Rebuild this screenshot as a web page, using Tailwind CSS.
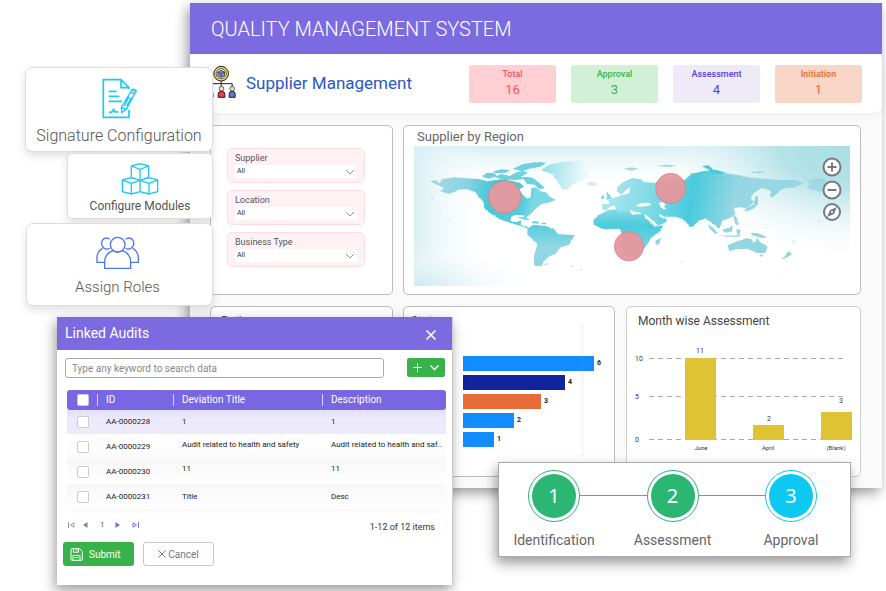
<!DOCTYPE html>
<html lang="en">
<head>
<meta charset="utf-8">
<meta name="viewport" content="width=device-width, initial-scale=1">
<title>Quality Management System</title>
<script src="https://cdn.jsdelivr.net/npm/@tailwindcss/browser@4"></script>
</head>
<body class="bg-white font-[Roboto,'Liberation_Sans',sans-serif] text-[#555]">
<div class="relative min-h-screen overflow-hidden pt-[3px] pr-1 pl-[190px]">

  <!-- Main window -->
  <main class="bg-[#fafafa] shadow-[-3px_5px_12px_rgba(0,0,0,0.4)]">
    <header class="flex h-[51px] items-center bg-[#7c6be0] px-[21px]">
      <h1 class="text-[20px] font-light text-white">QUALITY MANAGEMENT SYSTEM</h1>
    </header>

    <section class="flex h-[59px] items-center rounded-lg bg-white pr-5 pl-4 shadow-[0_2px_6px_rgba(0,0,0,0.06)]">
      <svg class="mb-1 h-[34px] w-[31px]" viewBox="62 195 92 102" aria-hidden="true">
        <path d="M74 262v-11h66v11M107 243v20" fill="none" stroke="#222" stroke-width="3"/>
        <circle cx="107" cy="221" r="22" fill="#f6cf58" stroke="#222" stroke-width="3"/>
        <circle cx="107" cy="221" r="15" fill="#e9eefb" stroke="#222" stroke-width="2"/>
        <path d="M97 216l10-5 10 5v11l-10 5-10-5z" fill="#7d92d8" stroke="#222" stroke-width="2"/>
        <path d="M97 216l10 5 10-5M107 221v11" fill="none" stroke="#222" stroke-width="2"/>
        <path d="M65 292v-10q0-7 9-7t9 7v10z" fill="#f2b84b" stroke="#222" stroke-width="2"/>
        <circle cx="74" cy="267" r="7" fill="#fbd9c2" stroke="#222" stroke-width="2"/>
        <path d="M98 292v-10q0-8 10-8t10 8v10z" fill="#f03c4b" stroke="#222" stroke-width="3"/>
        <circle cx="108" cy="266" r="7" fill="#fbd9c2" stroke="#222" stroke-width="2"/>
        <path d="M131 292v-10q0-8 9-8t9 8v10z" fill="#5c7bd0" stroke="#222" stroke-width="3"/>
        <circle cx="140" cy="266" r="7" fill="#fbd9c2" stroke="#222" stroke-width="2"/>
      </svg>
      <h2 class="ml-[9px] text-[17px] text-[#2b57c4]">Supplier Management</h2>
      <dl class="ml-auto flex gap-[15px] text-center">
        <div class="h-[38px] w-[87px] rounded-[3px] bg-[#ffd0d3] pt-[3px] text-[#fb5060]"><dt class="text-[9px] leading-[13px] font-medium">Total</dt><dd class="text-[13px] leading-[18px]">16</dd></div>
        <div class="h-[38px] w-[87px] rounded-[3px] bg-[#d2f0d6] pt-[3px] text-[#34b84b]"><dt class="text-[9px] leading-[13px] font-medium">Approval</dt><dd class="text-[13px] leading-[18px]">3</dd></div>
        <div class="h-[38px] w-[87px] rounded-[3px] bg-[#eeeaf8] pt-[3px] text-[#5a3de0]"><dt class="text-[9px] leading-[13px] font-medium">Assessment</dt><dd class="text-[13px] leading-[18px]">4</dd></div>
        <div class="h-[38px] w-[87px] rounded-[3px] bg-[#f7d5c7] pt-[3px] text-[#e56c36]"><dt class="text-[9px] leading-[13px] font-medium">Initiation</dt><dd class="text-[13px] leading-[18px]">1</dd></div>
      </dl>
    </section>

    <div class="flex flex-col gap-[11px] pt-3 pr-[21px] pb-[11px] pl-5">
      <div class="flex gap-[10px]">
        <!-- Filters -->
        <form class="flex h-[170px] w-[183px] flex-col gap-[7px] rounded-[5px] border border-[#bdbdbd] bg-white pt-[22px] pl-4">
          <div class="h-[35px] w-[138px] rounded-[5px] border border-[#ffdce2] bg-[#fff2f4] px-[7px] pt-[2px]">
            <label for="supplier" class="block text-[9px] leading-[14px]">Supplier</label>
            <div class="relative"><select id="supplier" class="block h-[13px] w-full appearance-none bg-white pl-[2px] text-[7px] leading-[13px] text-[#333]"><option>All</option></select>
            <svg class="pointer-events-none absolute top-1 right-[2px] h-[6px] w-[10px]" viewBox="0 0 10 6" fill="none" stroke="#999"><path d="M1 1l4 4 4-4"/></svg></div>
          </div>
          <div class="h-[35px] w-[138px] rounded-[5px] border border-[#ffdce2] bg-[#fff2f4] px-[7px] pt-[2px]">
            <label for="location" class="block text-[9px] leading-[14px]">Location</label>
            <div class="relative"><select id="location" class="block h-[13px] w-full appearance-none bg-white pl-[2px] text-[7px] leading-[13px] text-[#333]"><option>All</option></select>
            <svg class="pointer-events-none absolute top-1 right-[2px] h-[6px] w-[10px]" viewBox="0 0 10 6" fill="none" stroke="#999"><path d="M1 1l4 4 4-4"/></svg></div>
          </div>
          <div class="h-[35px] w-[138px] rounded-[5px] border border-[#ffdce2] bg-[#fff2f4] px-[7px] pt-[2px]">
            <label for="btype" class="block text-[9px] leading-[14px]">Business Type</label>
            <div class="relative"><select id="btype" class="block h-[13px] w-full appearance-none bg-white pl-[2px] text-[7px] leading-[13px] text-[#333]"><option>All</option></select>
            <svg class="pointer-events-none absolute top-1 right-[2px] h-[6px] w-[10px]" viewBox="0 0 10 6" fill="none" stroke="#999"><path d="M1 1l4 4 4-4"/></svg></div>
          </div>
        </form>

        <!-- Map -->
        <section class="h-[170px] flex-1 rounded-[5px] border border-[#bdbdbd] bg-white px-[10px] pt-[2px]">
          <h3 class="pl-[3px] text-[13px] leading-[18px] text-[#666]">Supplier by Region</h3>
          <div class="relative">
            <svg class="block h-[140px] w-full" viewBox="42 78 1308 420" preserveAspectRatio="none" role="img" aria-label="World map of suppliers">
              <defs>
                <linearGradient id="top" x1="0" y1="0" x2="0" y2="1"><stop offset="0" stop-color="#d5edf1"/><stop offset=".3" stop-color="#fff" stop-opacity="0"/></linearGradient>
                <radialGradient id="bl" cx="0" cy="1" r=".3"><stop offset="0" stop-color="#cdeaf0"/><stop offset="1" stop-color="#fff" stop-opacity="0"/></radialGradient>
                <linearGradient id="left" x1="0" x2="1" y1="0" y2="0"><stop offset="0" stop-color="#d8eff3"/><stop offset=".17" stop-color="#fff" stop-opacity="0"/></linearGradient>
                <radialGradient id="r" gradientUnits="userSpaceOnUse" cx="1350" cy="78" r="500" gradientTransform="translate(1350 78) scale(1.2 .7) translate(-1350 -78)"><stop offset="0" stop-color="#a9dfe3"/><stop offset=".35" stop-color="#b4e2e7"/><stop offset="1" stop-color="#fff" stop-opacity="0"/></radialGradient>
                <linearGradient id="na" gradientUnits="userSpaceOnUse" x1="120" y1="180" x2="400" y2="250"><stop offset="0" stop-color="#9ed7e4"/><stop offset=".25" stop-color="#8fd3e1"/><stop offset=".55" stop-color="#45c8da"/><stop offset=".9" stop-color="#55cddd"/><stop offset="1" stop-color="#7dd8e5"/></linearGradient>
                <linearGradient id="gr" gradientUnits="userSpaceOnUse" x1="425" y1="140" x2="560" y2="160"><stop offset="0" stop-color="#8fdde8"/><stop offset="1" stop-color="#f2fbfc"/></linearGradient>
                <linearGradient id="sa" x1="0" y1="0" x2="0" y2="1"><stop offset="0" stop-color="#55cedd"/><stop offset=".55" stop-color="#97d7e4"/><stop offset="1" stop-color="#8fd3e1"/></linearGradient>
                <linearGradient id="af" x1="0" y1="0" x2="0" y2="1"><stop offset="0" stop-color="#86dae6"/><stop offset=".35" stop-color="#4ccbdc"/><stop offset="1" stop-color="#8dd6e3"/></linearGradient>
                <linearGradient id="eu" gradientUnits="userSpaceOnUse" x1="-50" y1="190" x2="310" y2="260"><stop offset="0" stop-color="#a9e4ec"/><stop offset=".35" stop-color="#7bd9e5"/><stop offset=".65" stop-color="#48cbdc"/><stop offset="1" stop-color="#97d6e3"/></linearGradient>
                <filter id="coast" color-interpolation-filters="sRGB" x="-2%" y="-5%" width="104%" height="110%"><feTurbulence type="fractalNoise" baseFrequency=".12" numOctaves="3" seed="4"/><feDisplacementMap in="SourceGraphic" scale="6" xChannelSelector="R" yChannelSelector="G"/></filter>
              </defs>
              <path fill="#fff" d="M42 78h1308v420H42z"/>
              <path fill="url(#top)" d="M42 78h1308v420H42z"/>
              <path fill="url(#left)" d="M42 78h1308v420H42z"/>
              <path fill="url(#bl)" d="M42 78h1308v420H42z"/>
              <path fill="url(#r)" d="M42 78h1308v420H42z"/>
              <g filter="url(#coast)">
                <path fill="url(#na)" d="M90 184L108 181 120 190 125 178 160 172 240 178 262 184 300 178 340 183 362 190 372 200 358 208 368 224 382 236 392 230 394 205 408 202 425 215 436 216 452 232 468 240 445 248 425 252 405 268 393 282 380 290 378 300 370 286 345 285 333 291 332 303 350 306 364 301 362 315 385 320 384 326 362 318 330 308 300 298 275 283 255 268 250 246 225 216 200 208 175 210 150 222 120 214 132 205 120 198z"/>
                <path fill="#6dd2df" d="M245 170L257 159 284 158 290 168 268 176zM284 170L304 162 330 168 342 160 362 164 368 178 346 180 310 180zM280 154L305 148 330 150 318 158 288 160zM338 146L370 132 410 126 440 128 420 140 388 146 366 154zM340 160L368 152 384 158 368 168 344 168zM364 170L396 172 418 188 434 204 418 208 404 194 382 192z"/>
                <path fill="#6dd2df" d="M350 292h24l18 9-18-2zM396 302l22 3-4 6-18-2zM425 308h14v5h-14z"/>
                <path fill="url(#gr)" d="M424 150L446 134 490 125 545 122 580 135 570 160 548 182 520 192 500 210 485 205 470 180 454 162z"/>
                <path fill="#c9edf2" d="M558 190l18-4 16 5-8 7-20-2z"/>
                <path fill="url(#sa)" d="M382 326L400 314 438 318 462 328 474 342 524 346 508 374 482 382 468 400 446 410 430 426 426 439 402 434 402 408 412 372 396 356 382 344z"/>
                <path fill="url(#af)" d="M580 300L598 284 626 270 662 267 688 272 696 284 738 280 744 300 764 320 790 316 778 336 756 352 736 382 720 400 696 412 676 404 666 376 668 346 658 326 630 328 606 326 582 314z"/>
                <path fill="#8dd6e3" d="M766 362l18-9-6 18-10 6z"/>
                <g transform="translate(690 0)">
                  <path fill="url(#eu)" d="M-83 268L-84 252-62 252-66 240-42 232-22 224-2 220 0 200-14 212-26 224-40 214-38 200-20 186 6 174 34 178 40 186 76 188 90 182 140 178 164 180 184 162 216 154 248 150 284 160 330 166 356 172 400 176 450 180 496 180 520 190 496 202 456 206 440 222 424 232 422 212 396 204 372 218 362 234 372 246 350 266 334 262 312 264 316 284 300 294 276 302 274 312 268 326 246 308 226 296 206 302 188 320 178 320 164 300 138 290 100 290 112 302 98 312 76 318 52 300 40 284 20 276-2 272-16 276-34 264-24 276-36 276-48 256-62 262-72 272z"/>
                  <path fill="#48cbdc" d="M216 138l20-2 12 12-18-2zM236 146l24 4 28 8-20 4-30-4z"/>
                  <path fill="#9fd9e5" d="M-20 146l26-4 20 4-20 6zM76 138l30-4 34 2-20 5zM362 155h44l-8 4h-30zM532 184l20-8 34-2v42l-22-4-24-4-10-8 12-8z"/>
                  <path fill="#93d5e2" d="M376 228l8 0 0 24-14 14-20 8-8-2 14-10 16-10zM420 228l4-14 18-8-2 16-14 10zM310 284l10 8 8 24-10-2-6-12zM276 330l18-6 14-8-2 18-20 4zM234 312l16 12 14 16-8 2-18-16zM264 344l34 3 32-1v4h-40zM320 328l12 2-4 16-8-6zM362 338l22 2 28 12-14 2-32-8z"/>
                  <path fill="#93d5e2" d="M292 376L326 362 350 354 366 358 368 368 378 364 380 352 390 366 413 380 406 398 382 400 352 386 318 388 298 394zM388 404l12 0-6 8zM474 394l14 8-16 10-18 7 12-12z"/>
                  <path fill="#9fd9e5" d="M448 368l5 2-2 2zM486 362l8 0-2 4zM564 300l5 1v3l-5-1zM152 423l6 0v3h-6zM446 473l4 1v3z"/>
                </g>
                <path fill="#7bd5e2" d="M618 214l10 8 8 14-18 3 4-10zM604 228l8-2 0 10-8 2z"/>
                <path fill="#9fd9e5" d="M118 270l4 2v2zM148 300l8 1v2zM92 232l8-1v3zM512 436l8 2-6 3zM430 432l18-2-8 5zM540 446l8 3-6 2z"/>
                <path fill="#fff" d="M776 250l12-4 8 6-4 8 8 8-10 0-8-8zM706 258l14-8 16-2 20 4-12 6-26 2zM732 284l8 2 32 28-6 3-30-24zM776 282l8 2 14 10-4 3-14-6z"/>
              </g>
              <g fill="#e4989e" fill-opacity=".96" stroke="#de7780" stroke-width="2"><circle cx="314" cy="231" r="49"/><circle cx="687" cy="379" r="44"/><circle cx="812" cy="205" r="45"/></g>
            </svg>
            <div class="absolute top-[11px] right-2 flex flex-col gap-[3px]">
              <button type="button" aria-label="Zoom in"><svg class="block h-5 w-5" viewBox="0 0 20 20" fill="#fff" stroke="#77797c" stroke-width="2"><circle cx="10" cy="10" r="8.5"/><path d="M5.500 10h9M10 5.500v9"/></svg></button>
              <button type="button" aria-label="Zoom out"><svg class="block h-5 w-5" viewBox="0 0 20 20" fill="#fff" stroke="#77797c" stroke-width="2"><circle cx="10" cy="10" r="8.500"/><path d="M5.500 10h9"/></svg></button>
              <button type="button" aria-label="Reset view"><svg class="block h-5 w-5" viewBox="0 0 20 20" fill="#fff"><circle cx="10" cy="9" r="8" stroke="#77797c" stroke-width="2"/><path d="M15 4l-3 7-7 3 3-7z" fill="#77797c"/><circle cx="10" cy="9" r="1"/></svg></button>
            </div>
          </div>
        </section>
      </div>

      <div class="flex gap-[10px]">
        <section class="h-[171px] w-[183px] rounded-[5px] border border-[#bdbdbd] bg-white px-[10px] pt-[5px]">
          <h3 class="text-[12px] leading-[18px]">Rating</h3>
        </section>

        <!-- Status bars -->
        <section class="relative h-[171px] w-[212px] rounded-[5px] border border-[#bdbdbd] bg-white px-[7px] pt-[5px]">
          <h3 class="text-[12px] leading-[18px]">Status</h3>
          <ul class="mt-[26px] flex flex-col gap-1 pl-[52px] text-[7px] leading-[15px] font-bold text-[#222]">
            <li class="flex gap-[3px]"><span class="h-[15px] bg-[#118dff]" style="width:131px"></span>6</li>
            <li class="flex gap-[3px]"><span class="h-[15px] bg-[#12239e]" style="width:102px"></span>4</li>
            <li class="flex gap-[3px]"><span class="h-[15px] bg-[#e66c37]" style="width:78px"></span>3</li>
            <li class="flex gap-[3px]"><span class="h-[15px] bg-[#118dff]" style="width:51px"></span>2</li>
            <li class="flex gap-[3px]"><span class="h-[15px] bg-[#118dff]" style="width:31px"></span>1</li>
          </ul>
          <svg class="absolute top-[18px] left-[178px] h-[132px] w-px" viewBox="0 0 1 132" aria-hidden="true"><path d="M.5 0v132" stroke="#999" stroke-opacity=".25" stroke-dasharray="4 4"/></svg>
        </section>

        <!-- Monthly columns -->
        <section class="ml-px h-[171px] flex-1 rounded-[5px] border border-[#d0d0d0] bg-white pt-[5px]">
          <h3 class="pl-[11px] text-[12px] leading-[18px] text-[#444]">Month wise Assessment</h3>
          <svg class="block w-full" viewBox="0 0 233 130" font-size="7" fill="#333" role="img" aria-label="Assessments per month">
            <path d="M22 28.500h197M22 66.500h197M22 109.500h197" stroke="#aaa" stroke-dasharray="5 4"/>
            <path d="M58 28h31v82H58zM126 95h31v15h-31zM194 82h31v28h-31z" fill="#e0c335"/>
            <text x="8" y="31">10</text><text x="8" y="69">5</text><text x="8" y="112">0</text>
            <g text-anchor="middle"><text x="73" y="23">11</text><text x="142" y="91">2</text><text x="214" y="73">3</text>
            <g font-size="6"><text x="74" y="120">June</text><text x="141" y="120">April</text><text x="209" y="120">(Blank)</text></g></g>
          </svg>
        </section>
      </div>
    </div>
  </main>

  <!-- Floating shortcuts -->
  <nav class="absolute top-[67px] left-[25px] flex w-[188px] flex-col items-end text-[#555]">
    <a href="#signature" class="flex h-[85px] w-full flex-col items-center rounded-[7px] border border-[#dedede] bg-white pt-[10px] shadow-[0_4px_8px_rgba(0,0,0,0.12)]">
      <svg class="h-[41px] w-[37px]" viewBox="300 84 111 123" fill="none" stroke="#1cc9f2" stroke-width="5" aria-hidden="true">
        <path d="M384 118v-5l-24-24h-53v113h77v-22M360 89v24h24M323 124h24M323 139h32M323 154h40M324 187q12 2 14-11 2 12 6 9l8 1"/>
        <path d="M392 120l12 6-28 52-14 10-1-16zM362 172l13 7M389 127l12 6M392 120q4-5 10-1 6 3 2 8M384 140l-14 28M391 143l-14 26" stroke-width="4"/>
      </svg>
      <span class="mt-[7px] text-[16px] leading-[20px] font-light">Signature Configuration</span>
    </a>
    <a href="#modules" class="mt-px flex h-[66px] w-[146px] flex-col items-center rounded-[5px] border border-[#dedede] bg-white pt-[9px] shadow-[0_4px_8px_rgba(0,0,0,0.12)]">
      <svg class="h-8 w-[38px]" viewBox="366 41 114 96" fill="none" stroke="#1cc9f2" stroke-width="4" stroke-linejoin="round" aria-hidden="true">
        <path d="M397 50l26-7 26 7v34l-26 9-26-9zM397 50l26 10 26-10M423 60v33M370 92l27-7 26 8v34l-26 7-27-7zM370 92l27 10 26-9M397 102v32M423 93l27-8 26 7v35l-26 7-27-7M423 93l27 9 26-10M450 102v32"/>
      </svg>
      <span class="mt-[3px] text-[12px] leading-[16px] text-[#555]">Configure Modules</span>
    </a>
    <a href="#roles" class="mt-1 flex h-[83px] w-[187px] flex-col items-center rounded-[7px] border border-[#dedede] bg-white pt-3 pr-1 shadow-[0_4px_8px_rgba(0,0,0,0.12)]">
      <svg class="h-[34px] w-[44px]" viewBox="289 259 132 102" fill="none" stroke="#4b78f0" stroke-width="4" aria-hidden="true">
        <path d="M315 356v-19q0-24 24-34 15 8 30 0 24 10 24 34v19z"/><circle cx="354" cy="285" r="22"/>
        <path d="M330 269q-8-7-17-2-9 6-7 17 3 12 14 14 6 1 10-2M378 269q8-7 17-2 9 6 7 17-3 12-14 14-6 1-10-2M309 296q-17 9-17 29v13h23M399 296q17 9 17 29v13h-23"/>
      </svg>
      <span class="mt-[7px] text-[15px] leading-[20px] font-light">Assign Roles</span>
    </a>
  </nav>

  <!-- Linked audits dialog -->
  <section role="dialog" aria-labelledby="dlg" class="absolute top-[317px] left-[57px] h-[268px] w-[396px] border-r border-[#ccc] bg-white shadow-[-2px_5px_12px_rgba(0,0,0,0.4)]">
    <header class="flex h-[33px] items-center justify-between bg-[#7c6be0] px-2 text-white">
      <h2 id="dlg" class="text-[14px]">Linked Audits</h2>
      <button type="button" aria-label="Close" class="mt-[3px] mr-[7px]"><svg class="h-3 w-3" viewBox="0 0 12 12" stroke="#fff" stroke-width="1.600"><path d="M1.500 1.500l9 9M10.500 1.500l-9 9"/></svg></button>
    </header>
    <div class="flex justify-between pt-2 pr-[7px] pl-2">
      <input type="search" aria-label="Search data" placeholder="Type any keyword to search data" class="h-5 w-[319px] rounded-[3px] border border-[#aaa] px-[6px] text-[10px] placeholder:text-[#888]">
      <button type="button" aria-label="Add" class="flex h-[19px] w-[38px] items-center justify-center gap-2 rounded-[2px] bg-[#37b34a]">
        <svg class="h-[9px] w-[9px]" viewBox="0 0 9 9" stroke="#fff"><path d="M0 4.500h9M4.500 0v9"/></svg>
        <svg class="h-[6px] w-[9px]" viewBox="0 0 9 6" fill="none" stroke="#fff" stroke-width="1.400"><path d="M.5.500l4 4 4-4"/></svg>
      </button>
    </div>
    <table class="mt-3 ml-[10px] w-[379px] table-fixed text-left text-[8px] leading-[12px] text-[#222]">
      <colgroup><col class="w-[30px]"><col class="w-[76px]"><col class="w-[149px]"><col></colgroup>
      <thead class="text-[10px] text-white">
        <tr class="h-5 bg-[#7966e2]">
          <th class="rounded-l-[3px] pl-[10px]"><input type="checkbox" aria-label="Select all" class="block h-3 w-3 appearance-none rounded-[2px] border border-[#ccc] bg-white"></th>
          <th class="font-normal"><div class="h-3 border-l border-white/70 pl-2 leading-[12px]">ID</div></th>
          <th class="font-normal"><div class="h-3 border-l border-white/70 pl-2 leading-[12px]">Deviation Title</div></th>
          <th class="rounded-r-[3px] font-normal"><div class="h-3 border-l border-white/70 pl-2 leading-[12px]">Description</div></th>
        </tr>
      </thead>
      <tbody>
        <tr class="h-6 bg-linear-to-b from-[#e4e0fa] from-5% via-[#edeafc] via-40% to-[#edeafc]">
          <td class="pl-[10px]"><input type="checkbox" aria-label="Select AA-0000228" class="block h-3 w-3 appearance-none rounded-[2px] border border-[#ccc] bg-white"></td>
          <td class="pl-[9px]">AA-0000228</td><td class="pl-[9px]">1</td><td class="pl-[9px]">1</td>
        </tr>
        <tr class="h-[25px] bg-linear-to-b from-white to-[#fbfbfb]">
          <td class="pl-[10px]"><input type="checkbox" aria-label="Select AA-0000229" class="block h-3 w-3 appearance-none rounded-[2px] border border-[#ccc] bg-white"></td>
          <td class="pl-[9px]">AA-0000229</td><td class="pb-1 pl-[9px] whitespace-nowrap">Audit related to health and safety</td><td class="pb-1 pl-[9px] whitespace-nowrap">Audit related to health and saf..</td>
        </tr>
        <tr class="h-[25px] bg-linear-to-b from-[#f7f7f7] to-white">
          <td class="pl-[10px]"><input type="checkbox" aria-label="Select AA-0000230" class="block h-3 w-3 appearance-none rounded-[2px] border border-[#ccc] bg-white"></td>
          <td class="pl-[9px]">AA-0000230</td><td class="pb-[6px] pl-[9px]">11</td><td class="pb-[6px] pl-[9px]">11</td>
        </tr>
        <tr class="h-[25px] bg-linear-to-b from-[#f7f7f7] to-white shadow-[0_3px_4px_rgba(0,0,0,0.03)]">
          <td class="pl-[10px]"><input type="checkbox" aria-label="Select AA-0000231" class="block h-3 w-3 appearance-none rounded-[2px] border border-[#ccc] bg-white"></td>
          <td class="pl-[9px]">AA-0000231</td><td class="pl-[9px]">Title</td><td class="pl-[9px]">Desc</td>
        </tr>
      </tbody>
    </table>
    <div class="mt-[6px] flex items-center justify-between pr-[17px] pl-[11px]">
      <nav aria-label="Pages" class="flex items-center text-[8px]">
        <button type="button" aria-label="First page"><svg class="h-[6px] w-[7px]" viewBox="0 0 7 6" fill="none" stroke="#999"><path d="M.5 0v6M6 .8v4.400L2.500 3z"/></svg></button>
        <button type="button" aria-label="Previous page" class="ml-2"><svg class="h-[6px] w-[5px]" viewBox="0 0 5 6" fill="#888"><path d="M4.500 0v6L0 3z"/></svg></button>
        <button type="button" class="mr-[10px] ml-3">1</button>
        <button type="button" aria-label="Next page"><svg class="h-[6px] w-[5px]" viewBox="0 0 5 6" fill="#7c6be0"><path d="M.5 0v6L5 3z"/></svg></button>
        <button type="button" aria-label="Last page" class="ml-3"><svg class="h-[6px] w-[7px]" viewBox="0 0 7 6" fill="none" stroke="#7c6be0"><path d="M6.500 0v6M1 .8v4.400L4.500 3z"/></svg></button>
      </nav>
      <p class="mt-1 text-[9px] leading-[16px] text-[#333]">1-12 of 12 items</p>
    </div>
    <div class="mt-[7px] flex gap-[9px] pl-[6px] text-[10px]">
      <button type="submit" class="flex h-6 w-[71px] items-center gap-[6px] rounded-[3px] bg-[#37b34a] pl-[7px] text-white">
        <svg class="h-[13px] w-[13px]" viewBox="0 0 13 13" fill="none" stroke="#fff"><path d="M1 1.500Q1 .7 2 .7h7.500l2.800 2.800V11.500q0 .8-.8.8H2q-1 0-1-.8zM3.500.7v3.500h5V.7M3 12.300V7.500h7v4.800M4.500 9.500h4M6.800 1.500v1.500"/></svg>
        Submit</button>
      <button type="button" class="flex h-6 w-[71px] items-center justify-center gap-[2px] rounded-[3px] border border-[#c8c8c8] bg-white text-[#777]">
        <svg class="h-2 w-2" viewBox="0 0 8 8" stroke="#777"><path d="M.5.500l7 7M7.500.500l-7 7"/></svg>Cancel</button>
    </div>
  </section>

  <!-- Progress steps -->
  <section class="absolute top-[462px] left-[498px] w-[353px] border border-[#aaa] bg-white pt-[7px] pr-[14px] pb-[7px] pl-[10px] shadow-[-2px_6px_12px_rgba(0,0,0,0.4)]">
    <ol class="relative flex justify-between text-center">
      <li class="absolute top-[25px] right-11 left-11 h-px bg-[#3fbd80]" aria-hidden="true"></li>
      <li class="relative flex w-[90px] flex-col items-center text-[14px]">
        <span class="h-[52px] w-[52px] rounded-full border border-[#2cb673] bg-white p-[3px]"><span class="flex h-full items-center justify-center rounded-full bg-[#2cb673] font-['Noto_Sans',sans-serif] text-[20px] text-white">1</span></span>
        <span class="mt-[9px] leading-[18px] text-[#666]">Identification</span>
      </li>
      <li class="relative flex w-[90px] flex-col items-center text-[14px]">
        <span class="h-[52px] w-[52px] rounded-full border border-[#2cb673] bg-white p-[3px]"><span class="flex h-full items-center justify-center rounded-full bg-[#2cb673] font-['Noto_Sans',sans-serif] text-[20px] text-white">2</span></span>
        <span class="mt-[9px] leading-[18px] text-[#666]">Assessment</span>
      </li>
      <li class="relative flex w-[90px] flex-col items-center text-[14px]">
        <span class="h-[52px] w-[52px] rounded-full border border-[#0dc9f2] bg-white p-[3px]"><span class="flex h-full items-center justify-center rounded-full bg-[#0dc9f2] font-['Noto_Sans',sans-serif] text-[20px] text-white">3</span></span>
        <span class="mt-[9px] leading-[18px] text-[#666]">Approval</span>
      </li>
    </ol>
  </section>
</div>
</body>
</html>
